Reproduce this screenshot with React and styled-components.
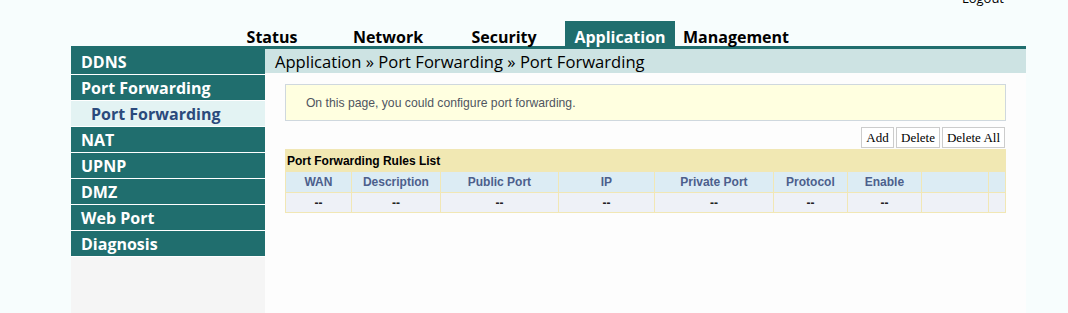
import React from "react";
import styled, { createGlobalStyle } from "styled-components";

const Global = createGlobalStyle`
  html, body { margin: 0; padding: 0; }
  body { background: #f7fdfd; font-family: "Open Sans", "Noto Sans", sans-serif; }
`;

const TEAL = "#206e6e";

const Page = styled.div`
  width: 955px;
  margin-left: 71px;
  min-height: 313px;
  display: flex;
  flex-direction: column;
  overflow: hidden;
`;

const Header = styled.div`
  height: 46px;
  border-bottom: 3px solid ${TEAL};
  display: flex;
  flex-direction: column;
`;

const LogoutRow = styled.div`
  height: 21px;
  display: flex;
  justify-content: flex-end;
  padding-right: 22px;
`;

const Logout = styled.a`
  font-size: 13px;
  line-height: 13px;
  margin-top: -8px;
  color: #000;
  text-decoration: none;
`;

const Nav = styled.div`
  display: flex;
  gap: 6px;
  padding-left: 146px;
  height: 25px;
  align-items: stretch;
`;

const NavItem = styled.div`
  width: 110px;
  display: flex;
  align-items: center;
  justify-content: center;
  font-size: 16px;
  font-weight: 700;
  padding-top: 6px;
  box-sizing: border-box;
  white-space: nowrap;
  color: ${(p) => (p.$active ? "#fff" : "#000")};
  background: ${(p) => (p.$active ? TEAL : "transparent")};
`;

const Body = styled.div`
  flex: 1;
  display: flex;
`;

const Sidebar = styled.div`
  width: 195px;
  background: #f5f5f5;
  display: flex;
  flex-direction: column;
`;

const SideItem = styled.div`
  height: 25px;
  border-bottom: 1px solid #fff;
  display: flex;
  align-items: center;
  padding-left: ${(p) => (p.$sub ? 20 : 10)}px;
  font-size: 16px;
  font-weight: 700;
  color: ${(p) => (p.$sub ? "#2b4a7c" : "#fff")};
  background: ${(p) => (p.$sub ? "#e3f3f3" : TEAL)};
`;

const Main = styled.div`
  flex: 1;
  background: #fdfdfd;
  display: flex;
  flex-direction: column;
`;

const Crumb = styled.div`
  height: 24px;
  background: #cde3e3;
  padding-left: 10px;
  font-size: 16.6px;
  display: flex;
  align-items: center;
  color: #000;
`;

const Content = styled.div`
  padding: 11px 20px;
  display: flex;
  flex-direction: column;
  font-family: "Liberation Sans", Arial, sans-serif;
`;

const Info = styled.div`
  height: 35px;
  border: 1px solid #cfd8de;
  background: #ffffe0;
  display: flex;
  align-items: center;
  padding-left: 20px;
  font-size: 12.2px;
  color: #4f5560;
`;

const Buttons = styled.div`
  display: flex;
  justify-content: flex-end;
  gap: 2px;
  margin-top: 6px;
  padding-right: 1px;
`;

const Btn = styled.button`
  height: 21px;
  min-width: 33px;
  padding: 0 4px;
  background: #fff;
  border: 1px solid #cccccc;
  font-family: "Liberation Serif", "Times New Roman", serif;
  font-size: 13px;
  color: #000;
`;

const Table = styled.table`
  margin-top: 1px;
  width: 720px;
  border-collapse: collapse;
  table-layout: fixed;
  font-size: 12px;
  border: 1px solid #f1e7b5;
`;

const TitleCell = styled.td`
  height: 21px;
  padding: 0 0 0 1px;
  background: #f1e8b3;
  font-weight: 700;
  color: #000;
`;

const Th = styled.th`
  height: 20px;
  padding: 0;
  background: #dcecf4;
  border: 1px solid #f1e7b5;
  color: #4c5f8c;
  font-weight: 700;
  text-align: center;
`;

const Td = styled.td`
  height: 19px;
  padding: 0;
  background: #eef1f7;
  border: 1px solid #f1e7b5;
  color: #222;
  font-weight: 700;
  text-align: center;
`;

const cols = [
  ["WAN", 66],
  ["Description", 89],
  ["Public Port", 118],
  ["IP", 96],
  ["Private Port", 119],
  ["Protocol", 74],
  ["Enable", 74],
  ["", 67],
  ["", 17],
];

export default function App() {
  return (
    <>
      <Global />
      <Page>
        <Header>
          <LogoutRow>
            <Logout href="#">Logout</Logout>
          </LogoutRow>
          <Nav>
            <NavItem>Status</NavItem>
            <NavItem>Network</NavItem>
            <NavItem>Security</NavItem>
            <NavItem $active>Application</NavItem>
            <NavItem>Management</NavItem>
          </Nav>
        </Header>
        <Body>
          <Sidebar>
            <SideItem>DDNS</SideItem>
            <SideItem>Port Forwarding</SideItem>
            <SideItem $sub>Port Forwarding</SideItem>
            <SideItem>NAT</SideItem>
            <SideItem>UPNP</SideItem>
            <SideItem>DMZ</SideItem>
            <SideItem>Web Port</SideItem>
            <SideItem>Diagnosis</SideItem>
          </Sidebar>
          <Main>
            <Crumb>Application » Port Forwarding » Port Forwarding</Crumb>
            <Content>
              <Info>On this page, you could configure port forwarding.</Info>
              <Buttons>
                <Btn>Add</Btn>
                <Btn>Delete</Btn>
                <Btn>Delete All</Btn>
              </Buttons>
              <Table>
                <colgroup>
                  {cols.map(([, w], i) => (
                    <col key={i} style={{ width: w }} />
                  ))}
                </colgroup>
                <tbody>
                  <tr>
                    <TitleCell colSpan={cols.length}>Port Forwarding Rules List</TitleCell>
                  </tr>
                  <tr>
                    {cols.map(([t], i) => (
                      <Th key={i}>{t}</Th>
                    ))}
                  </tr>
                  <tr>
                    {cols.map(([t], i) => (
                      <Td key={i}>{i < 7 ? "--" : ""}</Td>
                    ))}
                  </tr>
                </tbody>
              </Table>
            </Content>
          </Main>
        </Body>
      </Page>
    </>
  );
}
